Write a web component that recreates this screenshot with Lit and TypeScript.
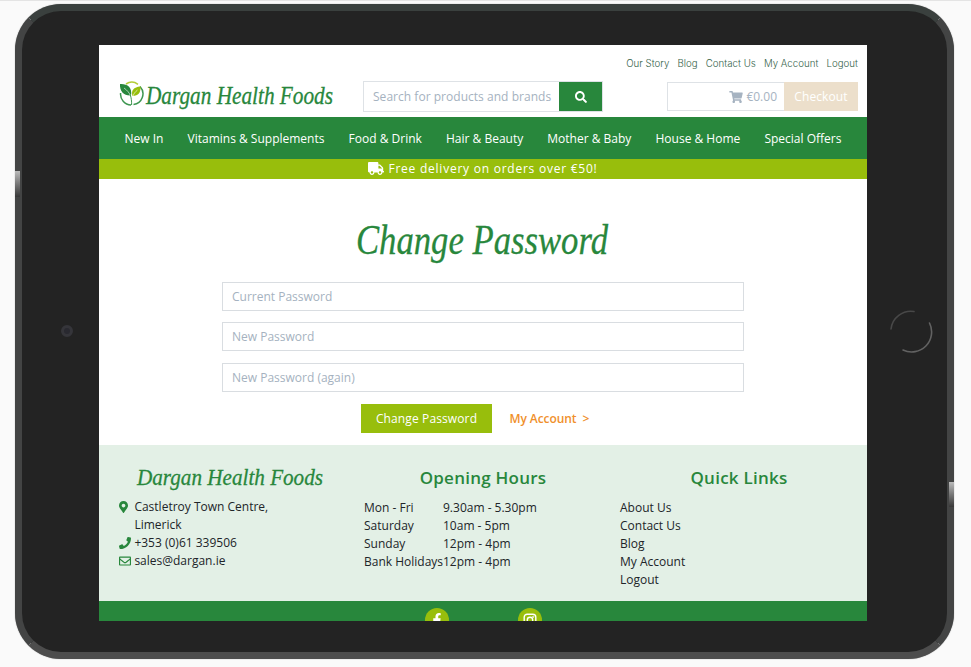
import { LitElement, html, css, svg } from "lit";
import { customElement } from "lit/decorators.js";

const ICONS: Record<string, { box: string; d: string }> = {
  search: { box: "0 0 512 512", d: "M505 442.7L405.3 343c-4.5-4.5-10.6-7-17-7H372c27.6-35.3 44-79.7 44-128C416 93.1 322.9 0 208 0S0 93.1 0 208s93.1 208 208 208c48.3 0 92.7-16.4 128-44v16.3c0 6.4 2.5 12.5 7 17l99.7 99.7c9.4 9.4 24.6 9.4 33.9 0l28.3-28.3c9.4-9.4 9.4-24.6.1-34zM208 336c-70.7 0-128-57.2-128-128 0-70.7 57.2-128 128-128 70.7 0 128 57.2 128 128 0 70.7-57.2 128-128 128z" },
  cart: { box: "0 0 576 512", d: "M528.12 301.319l47.273-208C578.806 78.301 567.391 64 551.99 64H159.208l-9.166-44.81C147.758 8.021 137.93 0 126.529 0H24C10.745 0 0 10.745 0 24v16c0 13.255 10.745 24 24 24h69.883l70.248 343.435C147.325 417.1 136 435.222 136 456c0 30.928 25.072 56 56 56s56-25.072 56-56c0-15.674-6.447-29.835-16.824-40h209.647C430.447 426.165 424 440.326 424 456c0 30.928 25.072 56 56 56s56-25.072 56-56c0-22.172-12.888-41.332-31.579-50.405l5.517-24.276c3.413-15.018-8.002-29.319-23.403-29.319H218.117l-6.545-32h293.145c11.206 0 20.92-7.754 23.403-18.681z" },
  truck: { box: "0 0 640 512", d: "M624 352h-16V243.9c0-12.7-5.1-24.9-14.1-33.9L494 110.1c-9-9-21.2-14.1-33.9-14.1H416V48c0-26.5-21.5-48-48-48H48C21.5 0 0 21.5 0 48v320c0 26.5 21.5 48 48 48h16c0 53 43 96 96 96s96-43 96-96h128c0 53 43 96 96 96s96-43 96-96h48c8.8 0 16-7.2 16-16v-32c0-8.8-7.2-16-16-16zM160 464c-26.5 0-48-21.5-48-48s21.5-48 48-48 48 21.5 48 48-21.5 48-48 48zm320 0c-26.5 0-48-21.5-48-48s21.5-48 48-48 48 21.5 48 48-21.5 48-48 48zm80-208H416V144h44.1l99.9 99.9V256z" },
  marker: { box: "0 0 384 512", d: "M172.268 501.67C26.97 291.031 0 269.413 0 192 0 85.961 85.961 0 192 0s192 85.961 192 192c0 77.413-26.97 99.031-172.268 309.67-9.535 13.774-29.93 13.773-39.464 0zM192 272c44.183 0 80-35.817 80-80s-35.817-80-80-80-80 35.817-80 80 35.817 80 80 80z" },
  phone: { box: "0 0 512 512", d: "M493.4 24.6l-104-24c-11.3-2.6-22.9 3.3-27.5 13.9l-48 112c-4.2 9.8-1.4 21.3 6.9 28l60.6 49.6c-36 76.7-98.9 140.5-177.2 177.2l-49.6-60.6c-6.8-8.3-18.2-11.1-28-6.9l-112 48C3.9 366.5-2 378.1.6 389.4l24 104C27.1 504.2 36.7 512 48 512c256.1 0 464-207.5 464-464 0-11.2-7.7-20.9-18.6-23.4z" },
  mail: { box: "0 0 512 512", d: "M464 64H48C21.49 64 0 85.49 0 112v288c0 26.51 21.49 48 48 48h416c26.51 0 48-21.49 48-48V112c0-26.51-21.49-48-48-48zm0 48v40.805c-22.422 18.259-58.168 46.651-134.587 106.49-16.841 13.247-50.201 45.072-73.413 44.701-23.208.375-56.579-31.459-73.413-44.701C106.18 199.465 70.425 171.067 48 152.805V112h416zM48 400V214.398c22.914 18.251 55.409 43.862 104.938 82.646 21.857 17.205 60.134 55.186 103.062 54.955 42.717.231 80.509-37.199 103.053-54.947 49.528-38.783 82.032-64.401 104.947-82.653V400H48z" },
  facebook: { box: "0 0 320 512", d: "M279.14 288l14.22-92.66h-88.91v-60.13c0-25.35 12.42-50.06 52.24-50.06h40.42V6.26S260.43 0 225.36 0c-73.22 0-121.08 44.38-121.08 124.72v70.62H22.89V288h81.39v224h100.17V288z" },
};

const icon = (name: string) => html`<svg class="icon icon-${name}" viewBox=${ICONS[name].box}>${svg`<path fill="currentColor" d=${ICONS[name].d}></path>`}</svg>`;

const script = (cls: string, text: string, width: number, height: number, size: number, base: number) => html`
  <svg class=${cls} width=${width} height=${height}>
    <text class="script" x="0" y=${base} font-size=${size} textLength=${width - 2} lengthAdjust="spacingAndGlyphs">${text}</text>
  </svg>`;

@customElement("app-root")
export class AppRoot extends LitElement {
  static styles = css`
    :host { display: block; font-family: "Open Sans", sans-serif; font-size: 12px; color: #212529; }
    * { box-sizing: border-box; }
    .stage { height: 667px; padding: 3px 16px 8px 15px; border-top: 1px solid #e4e4e4; background: #fafafa; overflow: hidden; }
    .tablet { position: relative; width: 939px; height: 655px; border: 7px solid #434444; border-top-color: #3a403e; border-bottom-color: #4d4d4d; border-radius: 46px; background: #232323; padding: 34px 77px; box-shadow: 0 0 1px #777; }
    .gleam { position: absolute; width: 5px; background: linear-gradient(#bbb, #777 50%, #383838); }
    .gleam-l { left: -7px; top: 160px; height: 26px; }
    .gleam-r { right: -7px; top: 471px; height: 25px; }
    .camera { position: absolute; left: 39px; top: 314px; width: 12px; height: 12px; border: 3px solid #35353a; border-radius: 50%; background: #292930; }
    .home { position: absolute; left: 867px; top: 298px; width: 44px; height: 44px; }
    .screen { width: 768px; height: 576px; background: #fff; overflow: hidden; display: flex; flex-direction: column; }
    header { height: 72px; flex: none; padding: 10px 9px 0 20px; }
    .links { display: flex; justify-content: flex-end; gap: 8px; height: 18px; font: 300 9.7px/18px Inter, sans-serif; color: #35634a; letter-spacing: .03px; }
    .brandrow { display: flex; align-items: center; height: 29px; margin-top: 9px; }
    .leaf { width: 26px; height: 26px; margin-top: -6px; flex: none; }
    .logo, .title, .foot-logo { overflow: visible; }
    .logo { margin: 2px -1px 0 1px; flex: none; }
    .script { font-family: "Liberation Serif", serif; font-style: italic; fill: #28873c; stroke: #28873c; stroke-width: .3px; }
    .search { display: flex; width: 240px; height: 31px; margin-left: 29px; border: 1px solid #dee2e6; font-size: 12px; line-height: 29px; color: #a5b2c0; flex: none; }
    .query { flex: 1; padding-left: 9px; white-space: nowrap; letter-spacing: .03px; }
    .go { width: 43px; background: #28873c; color: #fff; display: grid; place-items: center; }
    .search .icon { width: 12px; height: 12px; }
    .cart-box { display: flex; width: 191px; height: 29px; margin-left: auto; border: 1px solid #dee2e6; line-height: 27px; color: #a6b3c1; }
    .total { flex: 1; display: flex; justify-content: flex-end; align-items: center; gap: 3px; padding-right: 8px; }
    .total .icon { width: 14px; height: 12px; }
    .checkout { width: 74px; margin: -1px; line-height: 29px; text-align: center; background: #ecdfcb; color: #fff; letter-spacing: .1px; }
    nav { height: 42px; flex: none; background: #28873c; color: #fff; display: flex; justify-content: space-between; align-items: center; padding: 1px 25.5px 0 25.5px; white-space: nowrap; }
    .promo { height: 20px; flex: none; background: #98be0c; color: #fff; display: flex; justify-content: center; align-items: center; gap: 4px; padding: 0 0 2px; font-weight: 500; letter-spacing: .76px; }
    .promo .icon { width: 16px; height: 13px; }
    main { height: 266px; flex: none; padding: 37px 123px 0; display: flex; flex-direction: column; }
    .title { align-self: center; margin-bottom: 10px; }
    .field { height: 29px; flex: none; margin-bottom: 11.4px; border: 1px solid #d9dde1; padding-left: 9px; line-height: 27px; color: #a5b2c0; }
    .actions { display: flex; padding-left: 139px; gap: 17.5px; line-height: 29px; margin-top: .6px; }
    .submit { width: 131px; height: 29px; background: #98be0c; color: #fff; text-align: center; letter-spacing: .12px; }
    .back { color: #f0902b; font-weight: 600; white-space: pre; letter-spacing: -.08px; }
    footer { height: 156px; flex: none; display: grid; grid-template-columns: repeat(3, 256px); background: #e3f0e6; line-height: 18px; }
    .col { padding: 20px 9px 0; }
    .col:first-child { padding: 20px 12px 0 20px; }
    h2 { margin: 0 0 8px; height: 26px; font-size: 17px; line-height: 26px; font-weight: 600; letter-spacing: .25px; color: #28873c; text-align: center; }
    .foot-logo { display: block; margin: 0 auto 3px; }
    .contact { display: grid; grid-template-columns: 15.4px auto; }
    .contact .icon { height: 12px; width: 12px; margin-top: 3px; color: #28873c; }
    .contact .icon-marker { width: 9px; }
    .hours { display: grid; grid-template-columns: 79px auto; white-space: nowrap; }
    .social { height: 20px; flex: none; background: #28873c; display: flex; justify-content: center; gap: 69px; padding: 7px 0 0; overflow: hidden; }
    .badge { width: 24px; height: 24px; flex: none; border-radius: 50%; background: #98be0c; color: #fff; display: grid; place-items: center; }
    .badge svg { width: 14px; height: 14px; }
  `;

  render() {
    return html`
      <div class="stage"><div class="tablet">
        <div class="gleam gleam-l"></div><div class="gleam gleam-r"></div>
        <div class="camera"></div>
        <svg class="home" viewBox="0 0 44 44" fill="none" stroke-width="1.6" stroke-linecap="round">
          <path d="M2 20A20 20 0 0 1 25 2.500" stroke="#484848"></path>
          <path d="M40.500 14A20 20 0 0 1 14 41" stroke="#626262"></path>
        </svg>
        <div class="screen">
          <header>
            <div class="links">${["Our Story", "Blog", "Contact Us", "My Account", "Logout"].map((t) => html`<span>${t}</span>`)}</div>
            <div class="brandrow">
              <svg class="leaf" viewBox="0 0 26 26" fill="none">
                <path d="M7 3A10.600 10.600 0 0 1 19 3.300" stroke="#b4cc35" stroke-width="1.500"></path>
                <path d="M21 5.500A10.800 10.800 0 0 1 14.500 23.600M12 24A10.800 10.800 0 0 1 1.600 12" stroke="#3d9650" stroke-width="1.500"></path>
                <path d="M1 3C8 2.500 13.500 6 12 14.500C5 15 .5 10.500 1 3Z" fill="#28873c"></path>
                <path d="M21.500 5.500C14.500 6 11.800 9.500 13.500 15C19.500 15 21.800 11.500 21.500 5.500Z" fill="#98be0c"></path>
                <path d="M5 7C8.500 9.500 10.500 12 11.500 15M18.500 9C16 11 14.500 13 13.700 16" stroke="#fff" stroke-width=".6"></path>
                <path d="M11.300 14C12.300 17 12.700 20 12.600 24" stroke="#3d9650" stroke-width="1"></path>
              </svg>
              ${script("logo", "Dargan Health Foods", 189, 36, 25, 24)}
              <div class="search"><span class="query">Search for products and brands</span><span class="go">${icon("search")}</span></div>
              <div class="cart-box"><span class="total">${icon("cart")}€0.00</span><span class="checkout">Checkout</span></div>
            </div>
          </header>
          <nav>${["New In", "Vitamins & Supplements", "Food & Drink", "Hair & Beauty", "Mother & Baby", "House & Home", "Special Offers"].map((t) => html`<span>${t}</span>`)}</nav>
          <div class="promo">${icon("truck")}<span>Free delivery on orders over €50!</span></div>
          <main>
            ${script("title", "Change Password", 254, 56, 43, 38)}
            ${["Current Password", "New Password", "New Password (again)"].map((t) => html`<div class="field">${t}</div>`)}
            <div class="actions"><span class="submit">Change Password</span><span class="back">My Account  &gt;</span></div>
          </main>
          <footer>
            <div class="col">
              ${script("foot-logo", "Dargan Health Foods", 188, 30, 23, 20)}
              <div class="contact">${icon("marker")}<span>Castletroy Town Centre,<br>Limerick</span>${icon("phone")}<span>+353 (0)61 339506</span>${icon("mail")}<span>sales@dargan.ie</span></div>
            </div>
            <div class="col"><h2>Opening Hours</h2>
              <div class="hours">${["Mon - Fri", "9.30am - 5.30pm", "Saturday", "10am - 5pm", "Sunday", "12pm - 4pm", "Bank Holidays", "12pm - 4pm"].map((t) => html`<span>${t}</span>`)}</div>
            </div>
            <div class="col"><h2>Quick Links</h2>
              ${["About Us", "Contact Us", "Blog", "My Account", "Logout"].map((t) => html`<div>${t}</div>`)}
            </div>
          </footer>
          <div class="social">
            <span class="badge">${icon("facebook")}</span>
            <span class="badge"><svg viewBox="0 0 14 14" fill="none" stroke="#fff" stroke-width="1.400"><rect x="1.200" y="1.200" width="11.600" height="11.600" rx="3"></rect><circle cx="7" cy="7" r="2.700"></circle><circle cx="10.300" cy="3.700" r=".3"></circle></svg></span>
          </div>
        </div>
      </div></div>`;
  }
}
